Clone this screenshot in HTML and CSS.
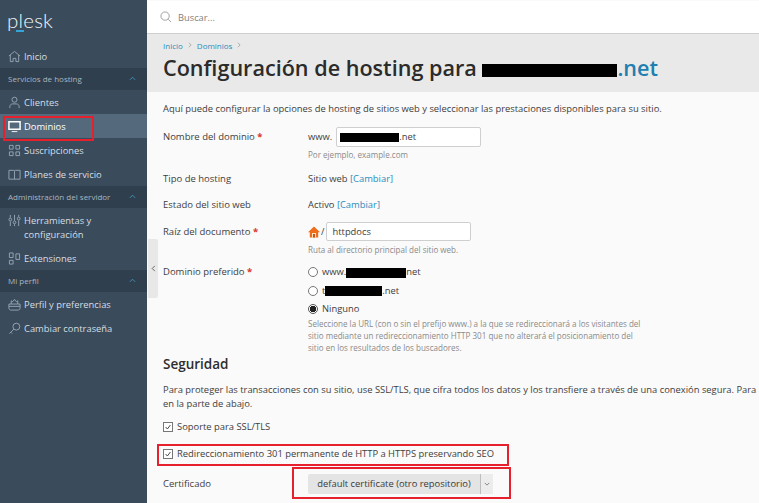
FILE: index.html
```html
<!DOCTYPE html>
<html lang="es">
  <head>
    <meta charset="utf-8">
    <title>Configuración de hosting</title>
    <link rel="stylesheet" href="styles.css">
  </head>
  <body>
    <div class="page">
      <aside class="sidebar">
        <div class="logo">plesk<span class="logoDash"></span></div>
        <a class="navItem">
          <svg class="navIcon" viewBox="0 0 14 14"><path d="M1 6.500 7 1.500l6 5M2.500 5.500v7h3V9h3v3.500h3v-7"/></svg>
          <span>Inicio</span>
        </a>
        <div class="navSection"><span>Servicios de hosting</span><svg class="caret" viewBox="0 0 8 5"><path d="M1 4l3-3 3 3"/></svg></div>
        <a class="navItem">
          <svg class="navIcon" viewBox="0 0 14 14"><circle cx="7" cy="4" r="2.700"/><path d="M2 13v-1.500c0-2 1.500-3 3-3h4c1.500 0 3 1 3 3V13"/></svg>
          <span>Clientes</span>
        </a>
        <a class="navItem active">
          <svg class="navIcon" viewBox="0 0 14 14"><path class="solid" d="M1 2h12v8H1z"/><path d="M4 12.500h6"/></svg>
          <span>Dominios</span>
        </a>
        <a class="navItem">
          <svg class="navIcon" viewBox="0 0 14 14"><path d="M1.500 1.500h4v4h-4zM8.500 1.500h4v4h-4zM1.500 8.500h4v4h-4zM8.500 8.500h4v4h-4z"/></svg>
          <span>Suscripciones</span>
        </a>
        <a class="navItem">
          <svg class="navIcon" viewBox="0 0 14 14"><path d="M1 2.500h5c.6 0 1 .4 1 1 0-.6.4-1 1-1h5v9.500H1zM7 3.500V12"/></svg>
          <span>Planes de servicio</span>
        </a>
        <div class="navSection"><span>Administración del servidor</span><svg class="caret" viewBox="0 0 8 5"><path d="M1 4l3-3 3 3"/></svg></div>
        <a class="navItem tall">
          <svg class="navIcon" viewBox="0 0 14 14"><path d="M2.500 1v3M2.500 8v5M7 1v6M7 11v2M11.500 1v2M11.500 7v6"/><circle cx="2.500" cy="6" r="1.500"/><circle cx="7" cy="9" r="1.500"/><circle cx="11.500" cy="5" r="1.500"/></svg>
          <span>Herramientas y<br>configuración</span>
        </a>
        <a class="navItem">
          <svg class="navIcon" viewBox="0 0 14 14"><path d="M1.500 1h4v5h-4zM1.500 9h4v4h-4zM8.500 2h4v6h-4z"/></svg>
          <span>Extensiones</span>
        </a>
        <div class="navSection"><span>Mi perfil</span><svg class="caret" viewBox="0 0 8 5"><path d="M1 4l3-3 3 3"/></svg></div>
        <a class="navItem">
          <svg class="navIcon" viewBox="0 0 14 14"><path d="M1 6.500h12v4.500c0 1-1 2-2 2H3c-1 0-2-1-2-2zM1 9h12M3.500 6.500V3l1.500 1 2-2.500L9 4l1.500-1v3.500"/></svg>
          <span>Perfil y preferencias</span>
        </a>
        <a class="navItem">
          <svg class="navIcon" viewBox="0 0 14 14"><circle cx="9" cy="5" r="3.700"/><path d="M6.300 7.700 1.500 12.500M3 11l1.500 1.500"/></svg>
          <span>Cambiar contraseña</span>
        </a>
      </aside>

      <div class="main">
        <div class="searchBar">
          <svg class="searchIcon" viewBox="0 0 13 13"><circle cx="5.500" cy="5.500" r="4.500"/><path d="M9 9l3 3"/></svg>
          <span>Buscar...</span>
        </div>
        <div class="titleBand">
          <div class="crumbs">
            <a>Inicio</a><svg class="crumbSep" viewBox="0 0 5 8"><path d="M1 1l3 3-3 3"/></svg><a>Dominios</a><svg class="crumbSep" viewBox="0 0 5 8"><path d="M1 1l3 3-3 3"/></svg>
          </div>
          <h1>Configuración de hosting para <span class="domain"><span class="redact titleRedact"></span>.net</span></h1>
        </div>
        <div class="content">
          <p class="intro">Aquí puede configurar la opciones de hosting de sitios web y seleccionar las prestaciones disponibles para su sitio.</p>

          <div class="formRow nameRow">
            <label class="fieldLabel">Nombre del dominio <b class="req">*</b></label>
            <div class="fieldValue">
              <div class="inline">
                <span>www.</span>
                <div class="textInput domainInput"><span class="redact nameRedact"></span>.net</div>
              </div>
              <div class="hint">Por ejemplo, example.com</div>
            </div>
          </div>

          <div class="formRow plainRow">
            <label class="fieldLabel">Tipo de hosting</label>
            <div class="fieldValue">Sitio web <a class="link">[Cambiar]</a></div>
          </div>
          <div class="formRow plainRow">
            <label class="fieldLabel">Estado del sitio web</label>
            <div class="fieldValue">Activo <a class="link">[Cambiar]</a></div>
          </div>

          <div class="formRow rootRow">
            <label class="fieldLabel">Raíz del documento <b class="req">*</b></label>
            <div class="fieldValue">
              <div class="inline tight">
                <svg class="homeIcon" viewBox="0 0 12 12"><path fill="#ef6c1a" d="M6 .5 0 6.200h1.800V11.500h8.400V6.200H12z"/><path fill="#fbe3c0" d="M4 7h4v4.500H4z"/><path fill="#c9501a" d="M5 8h2v3.500H5z"/></svg>
                <span>/</span>
                <div class="textInput rootInput">httpdocs</div>
              </div>
              <div class="hint rootHint">Ruta al directorio principal del sitio web.</div>
            </div>
          </div>

          <div class="formRow radioRow">
            <label class="fieldLabel">Dominio preferido <b class="req">*</b></label>
            <div class="fieldValue">
              <div class="radioLine"><span class="radio"></span><span>www.<span class="redact radioRedact1"></span>net</span></div>
              <div class="radioLine"><span class="radio"></span><span>t<span class="redact radioRedact2"></span>.net</span></div>
              <div class="radioLine"><span class="radio checked"></span><span>Ninguno</span></div>
              <div class="hint radioHint">Seleccione la URL (con o sin el prefijo www.) a la que se redireccionará a los visitantes del<br>sitio mediante un redireccionamiento HTTP 301 que no alterará el posicionamiento del<br>sitio en los resultados de los buscadores.</div>
            </div>
          </div>

          <h2>Seguridad</h2>
          <p class="secureText">Para proteger las transacciones con su sitio, use SSL/TLS, que cifra todos los datos y los transfiere a través de una conexión segura. Para<br>en la parte de abajo.</p>

          <div class="checkLine first"><span class="check"><svg viewBox="0 0 10 10"><path d="M2 5l2.200 2.500L8 2.500"/></svg></span>Soporte para SSL/TLS</div>
          <div class="checkLine second"><span class="check"><svg viewBox="0 0 10 10"><path d="M2 5l2.200 2.500L8 2.500"/></svg></span>Redireccionamiento 301 permanente de HTTP a HTTPS preservando SEO</div>

          <div class="formRow certRow">
            <label class="fieldLabel">Certificado</label>
            <div class="select">
              <span class="selectText">default certificate (otro repositorio)</span>
              <span class="selectBtn"><svg viewBox="0 0 8 5"><path d="M1 1l3 3 3-3"/></svg></span>
            </div>
          </div>
        </div>
      </div>

      <div class="collapse"><svg viewBox="0 0 5 8"><path d="M4 1 1 4l3 3"/></svg></div>
      <div class="mark markNav"></div>
      <div class="mark markRedirect"></div>
      <div class="mark markCert"></div>
    </div>
  </body>
</html>
```

FILE: styles.css
```css
*{
  box-sizing: border-box;
  padding: 0px;
  margin: 0px;
}

:root{
  --navy: #3a4b5b;
  --navyDark: #2f3f4d;
  --navyActive: #54697c;
  --navText: #d5dde4;
  --iconGrey: #98a8b6;
  --text: #3e3e3e;
  --hintText: #8a8a8a;
  --blue: #2b8cbd;
  --red: #e6202c;
}

body{
  font-family: "Open Sans", "DejaVu Sans", sans-serif;
  font-size: 9.4px;
  color: var(--text);
  background-color: #fafafa;
  overflow: hidden;
}

.page{
  position: relative;
  display: flex;
  width: 759px;
  height: 503px;
  overflow: hidden;
}

.sidebar{
  flex: 0 0 147px;
  padding-top: 1px;
  background-color: var(--navy);
  color: var(--navText);
}

.logo{
  position: relative;
  height: 43px;
  padding: 7px 0px 0px 7px;
  font-family: "Lato", sans-serif;
  font-weight: 300;
  font-size: 20.5px;
  letter-spacing: 0.2px;
  color: #f2f5f7;
}

.logoDash{
  position: absolute;
  left: 16px;
  top: 29px;
  width: 8px;
  height: 2px;
  background-color: #35a4d6;
}

.navItem{
  display: flex;
  align-items: center;
  gap: 3px;
  height: 24px;
  padding-left: 8px;
  font-size: 9.4px;
}

.navItem.tall{
  align-items: flex-start;
  height: 38px;
  padding-top: 6px;
  line-height: 14px;
}

.navItem.active{
  background-color: var(--navyActive);
  color: #ffffff;
}

.navIcon{
  flex: 0 0 13px;
  width: 13px;
  height: 13px;
  fill: none;
  stroke: var(--iconGrey);
  stroke-width: 1;
}

.active .navIcon{
  stroke: #ffffff;
}

.navIcon .solid{
  stroke-width: 1.6;
}

.navSection{
  display: flex;
  align-items: center;
  justify-content: space-between;
  height: 22px;
  padding: 0px 11px 2px 8px;
  background-color: var(--navyDark);
  font-size: 8px;
  color: #aab6c1;
}

.caret{
  width: 7px;
  height: 5px;
  fill: none;
  stroke: #3f9cc6;
  stroke-width: 1;
}

.main{
  flex: 1;
  min-width: 0;
  display: flex;
  flex-direction: column;
}

.searchBar{
  display: flex;
  align-items: center;
  gap: 6px;
  height: 33px;
  margin-top: 1px;
  padding-left: 13px;
  background-color: #ffffff;
  border-bottom: 1px solid #cfcfcf;
  font-size: 9.3px;
  color: #7f7f7f;
}

.searchIcon{
  width: 12px;
  height: 12px;
  fill: none;
  stroke: #9a9a9a;
  stroke-width: 1;
}

.titleBand{
  height: 58px;
  padding: 5px 0px 0px 16px;
  background-color: #e9e9e9;
}

.crumbs{
  display: flex;
  align-items: center;
  height: 12px;
  font-size: 8px;
  color: var(--blue);
}

.crumbSep{
  width: 4px;
  height: 6px;
  margin: 0px 5px;
  fill: none;
  stroke: #9a9a9a;
  stroke-width: 1;
}

h1{
  margin-top: 2px;
  font-size: 21.6px;
  font-weight: 600;
  line-height: 30px;
  white-space: nowrap;
  color: #2b2b2b;
}

.domain{
  color: #1f7fb0;
}

.redact{
  display: inline-block;
  background-color: #000000;
  vertical-align: middle;
}

.titleRedact{
  width: 135px;
  height: 13px;
}

.content{
  flex: 1;
  padding: 10px 0px 0px 16px;
  background-color: #fafafa;
}

.intro{
  font-size: 9.4px;
  line-height: 14px;
  white-space: nowrap;
}

.formRow{
  display: flex;
}

.fieldLabel{
  flex: 0 0 145px;
  font-size: 9.5px;
}

.fieldValue{
  font-size: 9.4px;
}

.req{
  color: #d9342b;
}

.link{
  color: var(--blue);
}

.hint{
  margin-top: 2px;
  font-size: 8.05px;
  line-height: 12px;
  color: var(--hintText);
}

.inline{
  display: flex;
  align-items: center;
  gap: 4px;
}

.textInput{
  height: 20px;
  padding-left: 3px;
  border: 1px solid #cfcfcf;
  border-radius: 2px;
  background-color: #ffffff;
  line-height: 18px;
  font-size: 9.4px;
}

.nameRow{
  margin-top: 11px;
  height: 41px;
  line-height: 20px;
}

.domainInput{
  width: 145px;
}

.nameRedact{
  width: 59px;
  height: 9px;
}

.plainRow{
  height: 26px;
  padding-top: 3px;
  line-height: 16px;
}

.rootRow{
  margin-top: 2px;
  height: 41px;
  line-height: 19px;
}

.tight{
  gap: 1px;
}

.homeIcon{
  width: 12px;
  height: 12px;
}

.rootInput{
  width: 145px;
  height: 19px;
  margin-left: 1px;
  padding-left: 5px;
  line-height: 17px;
}

.rootHint{
  margin-top: 3px;
}

.radioRow{
  line-height: 18px;
}

.radioLine{
  display: flex;
  align-items: center;
  gap: 4px;
  height: 18.5px;
}

.radio{
  display: inline-block;
  width: 10px;
  height: 10px;
  border: 1px solid #777777;
  border-radius: 50%;
  background-color: #ffffff;
}

.radio.checked{
  border-color: #555555;
  background: radial-gradient(circle, #222222 0 3px, #ffffff 3.5px);
}

.radioRedact1{
  width: 60px;
  height: 10px;
}

.radioRedact2{
  width: 57px;
  height: 10px;
}

.radioHint{
  margin-top: -1px;
}

h2{
  margin-top: 0px;
  font-size: 13.5px;
  font-weight: 600;
  line-height: 20px;
  color: #2e2e2e;
}

.secureText{
  margin-top: 9px;
  font-size: 9.4px;
  line-height: 14px;
  white-space: nowrap;
}

.checkLine{
  display: flex;
  align-items: center;
  gap: 4px;
  font-size: 9.4px;
  white-space: nowrap;
}

.checkLine.first{
  margin-top: 8px;
  height: 16px;
}

.checkLine.second{
  margin-top: 11px;
  height: 16px;
}

.check{
  display: inline-block;
  width: 10px;
  height: 10px;
  border: 1px solid #777777;
  background-color: #ffffff;
}

.check svg{
  display: block;
  width: 8px;
  height: 8px;
  fill: none;
  stroke: #444444;
  stroke-width: 1.2;
}

.certRow{
  align-items: center;
  height: 20px;
  margin-top: 12px;
}

.select{
  display: flex;
  width: 185px;
  height: 20px;
  background-color: #e4e4e4;
  border-radius: 2px;
}

.selectText{
  flex: 1;
  text-align: center;
  font-size: 9.4px;
  line-height: 20px;
  color: #3a3a3a;
}

.selectBtn{
  flex: 0 0 13px;
  display: flex;
  align-items: center;
  justify-content: center;
  border-left: 1px solid #bdbdbd;
  background-color: #ececec;
}

.selectBtn svg{
  width: 6px;
  height: 4px;
  fill: none;
  stroke: #666666;
  stroke-width: 1;
}

.collapse{
  position: absolute;
  left: 148px;
  top: 239px;
  width: 10px;
  height: 59px;
  display: flex;
  align-items: center;
  justify-content: center;
  background-color: #e8e8e8;
  border-radius: 0px 2px 2px 0px;
}

.collapse svg{
  width: 5px;
  height: 7px;
  fill: none;
  stroke: #555555;
  stroke-width: 1;
}

/* red marks drawn over the screenshot */
.mark{
  position: absolute;
  border: 2px solid var(--red);
}

.markNav{
  left: 3px;
  top: 116px;
  width: 91px;
  height: 25px;
}

.markRedirect{
  left: 157px;
  top: 444px;
  width: 352px;
  height: 22px;
}

.markCert{
  left: 292px;
  top: 467px;
  width: 219px;
  height: 32px;
}
```
